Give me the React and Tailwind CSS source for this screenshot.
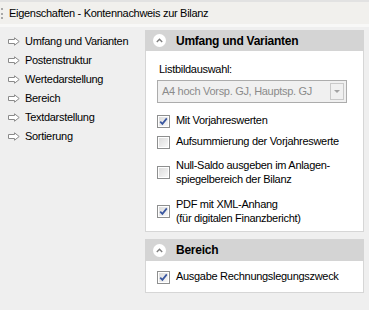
import React from "react";

function NavArrow() {
  return (
    <svg width="12" height="9" viewBox="0 0 12 9" className="shrink-0">
      <path d="M0.5 2.5 H6.5 V0.8 L11.2 4.5 L6.5 8.2 V6.5 H0.5 Z" fill="#fff" stroke="#8a8a8a" strokeWidth="1" strokeLinejoin="miter" />
    </svg>
  );
}

function Chevron() {
  return (
    <div className="w-[13px] h-[13px] rounded-full bg-white flex items-center justify-center shrink-0">
      <svg width="7" height="5" viewBox="0 0 7 5">
        <path d="M0.8 4 L3.5 1.3 L6.2 4" fill="none" stroke="#7d7d7d" strokeWidth="1.4" />
      </svg>
    </div>
  );
}

function Box({ checked }) {
  return (
    <div className="w-[13px] h-[13px] border border-[#8e8f8f] bg-white p-[1px] shrink-0">
      <div className="w-full h-full bg-gradient-to-br from-[#dcdcdc] to-[#f8f8f8] flex items-center justify-center">
        {checked && (
          <svg width="9" height="9" viewBox="0 0 9 9">
            <path d="M1.2 4.6 L3.4 6.9 L7.8 1.4" fill="none" stroke="#3a57a0" strokeWidth="1.7" />
          </svg>
        )}
      </div>
    </div>
  );
}

function Check({ checked, lines, className }) {
  return (
    <div className={"flex items-center gap-[6px] " + className}>
      <Box checked={checked} />
      <div className="leading-[13.5px]">
        {lines.map((l, i) => (
          <div key={i}>{l}</div>
        ))}
      </div>
    </div>
  );
}

function Header({ title, className }) {
  return (
    <div className={"bg-[#d4d4d4] flex items-center pl-[7px] gap-[10px] " + className}>
      <Chevron />
      <span className="font-bold text-[12px] tracking-[-0.25px]">{title}</span>
    </div>
  );
}

export default function App() {
  const nav = ["Umfang und Varianten", "Postenstruktur", "Wertedarstellung", "Bereich", "Textdarstellung", "Sortierung"];
  return (
    <div className="w-[369px] h-[310px] bg-[#efefef] overflow-hidden flex flex-col text-black text-[11px] tracking-[-0.3px] font-['Liberation_Sans',Arial,sans-serif]">
      <div className="h-[2px] bg-[#e2e2e2]" />
      <div className="h-[22px] bg-[#f1f0ed] flex items-center">
        <div className="w-[2px] h-[11px] ml-[1px] border-l-2 border-dotted border-[#a8a8a8]" />
        <span className="ml-[6px] mt-[1px]">Eigenschaften - Kontennachweis zur Bilanz</span>
      </div>
      <div className="h-[3px] bg-[#f8f8f7]" />
      <div className="flex pt-[3px]">
        <div className="w-[145px] pt-[2px] pl-[8px] flex flex-col">
          {nav.map((n) => (
            <div key={n} className="h-[19px] flex items-center gap-[5px]">
              <NavArrow />
              <span>{n}</span>
            </div>
          ))}
        </div>
        <div className="w-[219px] flex flex-col gap-[7px]">
          <div className="border border-[#d6d6d6] bg-white">
            <Header title="Umfang und Varianten" className="h-[21px] -mt-[1px] -mx-[1px] pl-[8px]" />
            <div className="pl-[11px] pb-[6px]">
              <div className="mt-[11px] h-[14px] flex items-center pl-[2px]">Listbildauswahl:</div>
              <div className="mt-[4px] w-[190px] h-[23px] border border-[#acacac] bg-[#f0f0f0] flex items-center justify-between pl-[4px] pr-[2px]">
                <span className="text-[#8b8b8b]">A4 hoch Vorsp. GJ, Hauptsp. GJ</span>
                <div className="w-[14px] h-[17px] border border-[#c9c9c9] flex items-center justify-center">
                  <svg width="6" height="3" viewBox="0 0 6 3">
                    <path d="M0 0 H6 L3 3 Z" fill="#a3a3a3" />
                  </svg>
                </div>
              </div>
              <Check checked className="mt-[11px] h-[14px]" lines={["Mit Vorjahreswerten"]} />
              <Check className="mt-[7px] h-[14px]" lines={["Aufsummierung der Vorjahreswerte"]} />
              <Check className="mt-[10px] h-[27px]" lines={["Null-Saldo ausgeben im Anlagen-", "spiegelbereich der Bilanz"]} />
              <Check checked className="mt-[12px] h-[27px]" lines={["PDF mit XML-Anhang", "(für digitalen Finanzbericht)"]} />
            </div>
          </div>
          <div className="border border-[#d6d6d6] bg-white">
            <Header title="Bereich" className="h-[22px] -mt-[1px] -mx-[1px] pl-[8px]" />
            <div className="pl-[11px] pb-[8px]">
              <Check checked className="mt-[9px] h-[14px]" lines={["Ausgabe Rechnungslegungszweck"]} />
            </div>
          </div>
        </div>
      </div>
    </div>
  );
}
